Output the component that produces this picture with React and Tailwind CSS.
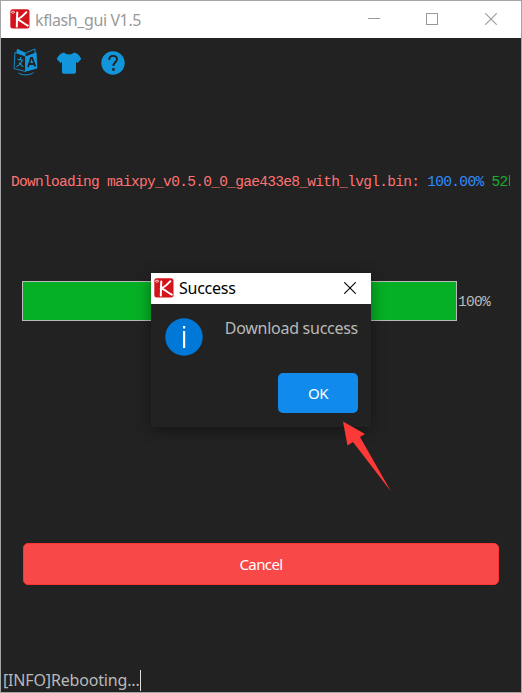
import React from "react";

const ui = "font-['Noto_Sans','Open_Sans',sans-serif]";
const mono = "font-['Liberation_Mono',monospace]";

function Logo() {
  return (
    <svg width="20" height="20" viewBox="0 0 20 20" className="block shrink-0">
      <rect x="0.3" y="0.3" width="19.2" height="19.2" rx="2.5" fill="#d3141c" />
      <ellipse cx="3" cy="3.2" rx="1.6" ry="1" fill="none" stroke="#fff" strokeWidth="0.7" />
      <path d="M7.3 3.4C7 8 7 12 6.8 17.6M16.4 3.2C13.5 6.5 11 8.8 7.6 10.4C11 12.2 14 14.4 17.8 16.6" fill="none" stroke="#fff" strokeWidth="2" strokeLinecap="round" />
    </svg>
  );
}

function TranslateIcon() {
  return (
    <svg width="26" height="28" viewBox="0 0 26 28" className="block shrink-0">
      <g fill="none" stroke="#1296db" strokeWidth="0.9">
        <path d="M2 4.5L1 20.5L12.5 23.5V8Z" />
        <path d="M12.5 5L22 1V6" />
        <path d="M5.5 25C9 27.6 17 27.6 20.5 24.5" />
      </g>
      <path d="M4.6 11.4L10.2 12.2M7.6 9V11.7M9 12.4C8.2 15.4 6.6 17.4 3.4 18.6M5.8 14.6L10.2 18.8" fill="none" stroke="#1296db" strokeWidth="1.1" />
      <path d="M4 0.8L12.5 4.8V8L3.4 4.8Z" fill="#1296db" />
      <path d="M13 8.2L23.6 4.2L24.2 20.6L13 23.6Z" fill="#1296db" />
      <path d="M15 19.2L18 9.8H19.2L22.2 18.4M16.2 16H21.2" fill="none" stroke="#222" strokeWidth="1.8" />
    </svg>
  );
}

function ShirtIcon() {
  return (
    <svg width="26" height="22" viewBox="0 0 26 22" className="block shrink-0">
      <path d="M8 0.5C10 3 16 3 18 0.5C21 1.2 23.5 3 25.3 7L21.5 11L20 10V20Q20 21.7 18.4 21.7H7.6Q6 21.7 6 20V10L4.5 11L0.7 7C2.5 3 5 1.2 8 0.5Z" fill="#1296db" />
    </svg>
  );
}

function HelpIcon() {
  return (
    <svg width="24" height="24" viewBox="0 0 24 24" className="block shrink-0">
      <circle cx="12" cy="12" r="11.7" fill="#1296db" />
      <path d="M8.2 9C8.2 6 9.5 4.9 12.1 4.9C14.7 4.9 16 6.2 16 8.3C16 11 12.4 11.2 12.4 15" fill="none" stroke="#222" strokeWidth="1.9" />
      <rect x="11.2" y="17.2" width="2.5" height="2.5" fill="#222" />
    </svg>
  );
}

function CloseIcon({ color }) {
  return (
    <svg width="12" height="12" viewBox="0 0 12 12" className="block -translate-y-px">
      <path d="M0.3 0.3L11.7 11.7M11.7 0.3L0.3 11.7" stroke={color} strokeWidth="1.1" />
    </svg>
  );
}

function Dialog() {
  return (
    <div className="absolute left-[150px] top-[272px] flex h-[154px] w-[220px] flex-col bg-[#222] shadow-[0_3px_14px_rgba(0,0,0,0.4)]">
      <div className="flex h-[31px] items-center bg-white pl-[3px] pr-[15px] text-black">
        <div className="-translate-y-px"><Logo /></div>
        <span className="ml-[5px] flex-1 text-[16px] leading-[31px] tracking-[-0.25px]">Success</span>
        <CloseIcon color="#000" />
      </div>
      <div className="flex justify-between pl-[14px] pr-[13px] pt-[14px]">
        <svg width="38" height="38" viewBox="0 0 38 38" className="block">
          <circle cx="19" cy="19" r="18.7" fill="#0078d7" />
          <rect x="18" y="8" width="2.2" height="2.5" fill="#fff" />
          <rect x="18" y="13" width="2.2" height="17" fill="#fff" />
        </svg>
        <span className="-mt-[2px] text-[16px] leading-[24px] text-[#b9b9b9] tracking-[-0.27px]">Download success</span>
      </div>
      <div className="mt-[17px] flex justify-end pr-[13px]">
        <button className="h-[40px] w-[80px] rounded-[5px] bg-[#108aec] text-[15px] text-white tracking-[-0.5px]">OK</button>
      </div>
    </div>
  );
}

export default function App() {
  return (
    <div className={`${ui} relative flex h-[693px] w-[522px] flex-col overflow-hidden border border-[#a5a5a5] bg-[#222]`}>
      <header className="flex h-[37px] shrink-0 items-center bg-white pl-[9px] pr-[24px] text-[#999]">
        <div className="-translate-y-px"><Logo /></div>
        <span className="ml-[5px] flex-1 text-[16px] tracking-[-0.4px]">kflash_gui V1.5</span>
        <div className="flex items-center">
          <div className="h-px w-[12px] -translate-y-px bg-[#999]" />
          <div className="ml-[46px] mr-[47px] h-[12px] w-[12px] -translate-y-px border border-[#999]" />
          <CloseIcon color="#999" />
        </div>
      </header>

      <nav className="flex h-[50px] shrink-0 items-center pl-[12px]">
        <div className="-translate-y-px"><TranslateIcon /></div>
        <div className="ml-[17px]"><ShirtIcon /></div>
        <div className="ml-[19px]"><HelpIcon /></div>
      </nav>

      <div className={`${mono} ml-[10px] mt-[84px] h-[20px] w-[499px] shrink-0 overflow-hidden whitespace-pre text-[14.5px] leading-[20px] tracking-[-0.695px]`}>
        <span className="text-[#ff7373]">Downloading maixpy_v0.5.0_0_gae433e8_with_lvgl.bin: </span>
        <span className="text-[#2f8cff]">100.00% </span>
        <span className="text-[#18b030]">52kB/s</span>
      </div>

      <div className="ml-[21px] mt-[89px] flex h-[40px] shrink-0 items-center">
        <div className="h-[40px] w-[435px] border border-[#b9b9b9] bg-[#06b025]" />
        <span className={`${mono} ml-px mt-[3px] text-[14.5px] text-[#b9b9b9] tracking-[-0.695px]`}>100%</span>
      </div>

      <button className="ml-[22px] mt-[222px] h-[42px] w-[476px] shrink-0 rounded-[5px] border border-[#ff3535] bg-[#f84848] text-[15px] text-white tracking-[-0.6px]">Cancel</button>

      <footer className="mt-auto flex h-[24px] items-center pl-[2px] text-[16px] leading-[22px] text-[#b9b9b9]">
        <span className="tracking-[-0.17px]">[INFO]Rebooting...</span>
        <span className="h-[21px] w-px bg-[#ddd]" />
      </footer>

      <Dialog />
      <svg width="50" height="72" viewBox="0 0 50 72" className="absolute left-[341px] top-[420px]">
        <path d="M1 0.5L23 13L18 16L49 70.5L11 21L5.5 24.5Z" fill="#ff3838" />
      </svg>
    </div>
  );
}
